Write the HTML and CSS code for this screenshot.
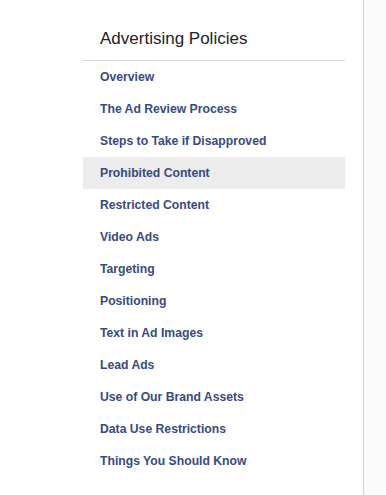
FILE: index.html
```html
<!DOCTYPE html>
<html lang="en">
<head>
  <meta charset="UTF-8">
  <meta name="viewport" content="width=device-width, initial-scale=1.0">
  <title>Advertising Policies</title>
  <link rel="stylesheet" href="styles.css">
</head>
<body>
  <div class="page">
    <div class="sidebar">
      <nav class="policy-nav">
        <h2 class="nav-title">Advertising Policies</h2>
        <ul class="nav-list">
          <li><a href="#">Overview</a></li>
          <li><a href="#">The Ad Review Process</a></li>
          <li><a href="#">Steps to Take if Disapproved</a></li>
          <li class="active"><a href="#">Prohibited Content</a></li>
          <li><a href="#">Restricted Content</a></li>
          <li><a href="#">Video Ads</a></li>
          <li><a href="#">Targeting</a></li>
          <li><a href="#">Positioning</a></li>
          <li><a href="#">Text in Ad Images</a></li>
          <li><a href="#">Lead Ads</a></li>
          <li><a href="#">Use of Our Brand Assets</a></li>
          <li><a href="#">Data Use Restrictions</a></li>
          <li><a href="#">Things You Should Know</a></li>
        </ul>
      </nav>
    </div>
    <div class="content"></div>
  </div>
</body>
</html>
```

FILE: styles.css
```css
html, body {
  height: 100%;
}

body {
  margin: 0;
  font-family: 'Liberation Sans', Arial, sans-serif;
  background: #ffffff;
}

.page {
  display: flex;
  height: 100%;
}

.sidebar {
  width: 363px;
  flex-shrink: 0;
  border-right: 1px solid #d3d3d3;
  background: #ffffff;
}

.content {
  flex: 1;
  background: #fbfbfb;
}

.policy-nav {
  margin-left: 83px;
  width: 262px;
}

.nav-title {
  margin: 0;
  height: 61px;
  box-sizing: border-box;
  padding: 29px 0 0 17px;
  font-size: 17px;
  line-height: 20px;
  font-weight: normal;
  color: #1d2129;
  border-bottom: 1px solid #d6d6d6;
}

.nav-list {
  list-style: none;
  margin: 0;
  padding: 0;
}

.nav-list li {
  height: 32px;
  display: flex;
  align-items: center;
  padding-left: 17px;
}

.nav-list li.active {
  background: #ececec;
}

.nav-list a {
  font-size: 12.2px;
  font-weight: bold;
  color: #384a82;
  text-decoration: none;
}
```
